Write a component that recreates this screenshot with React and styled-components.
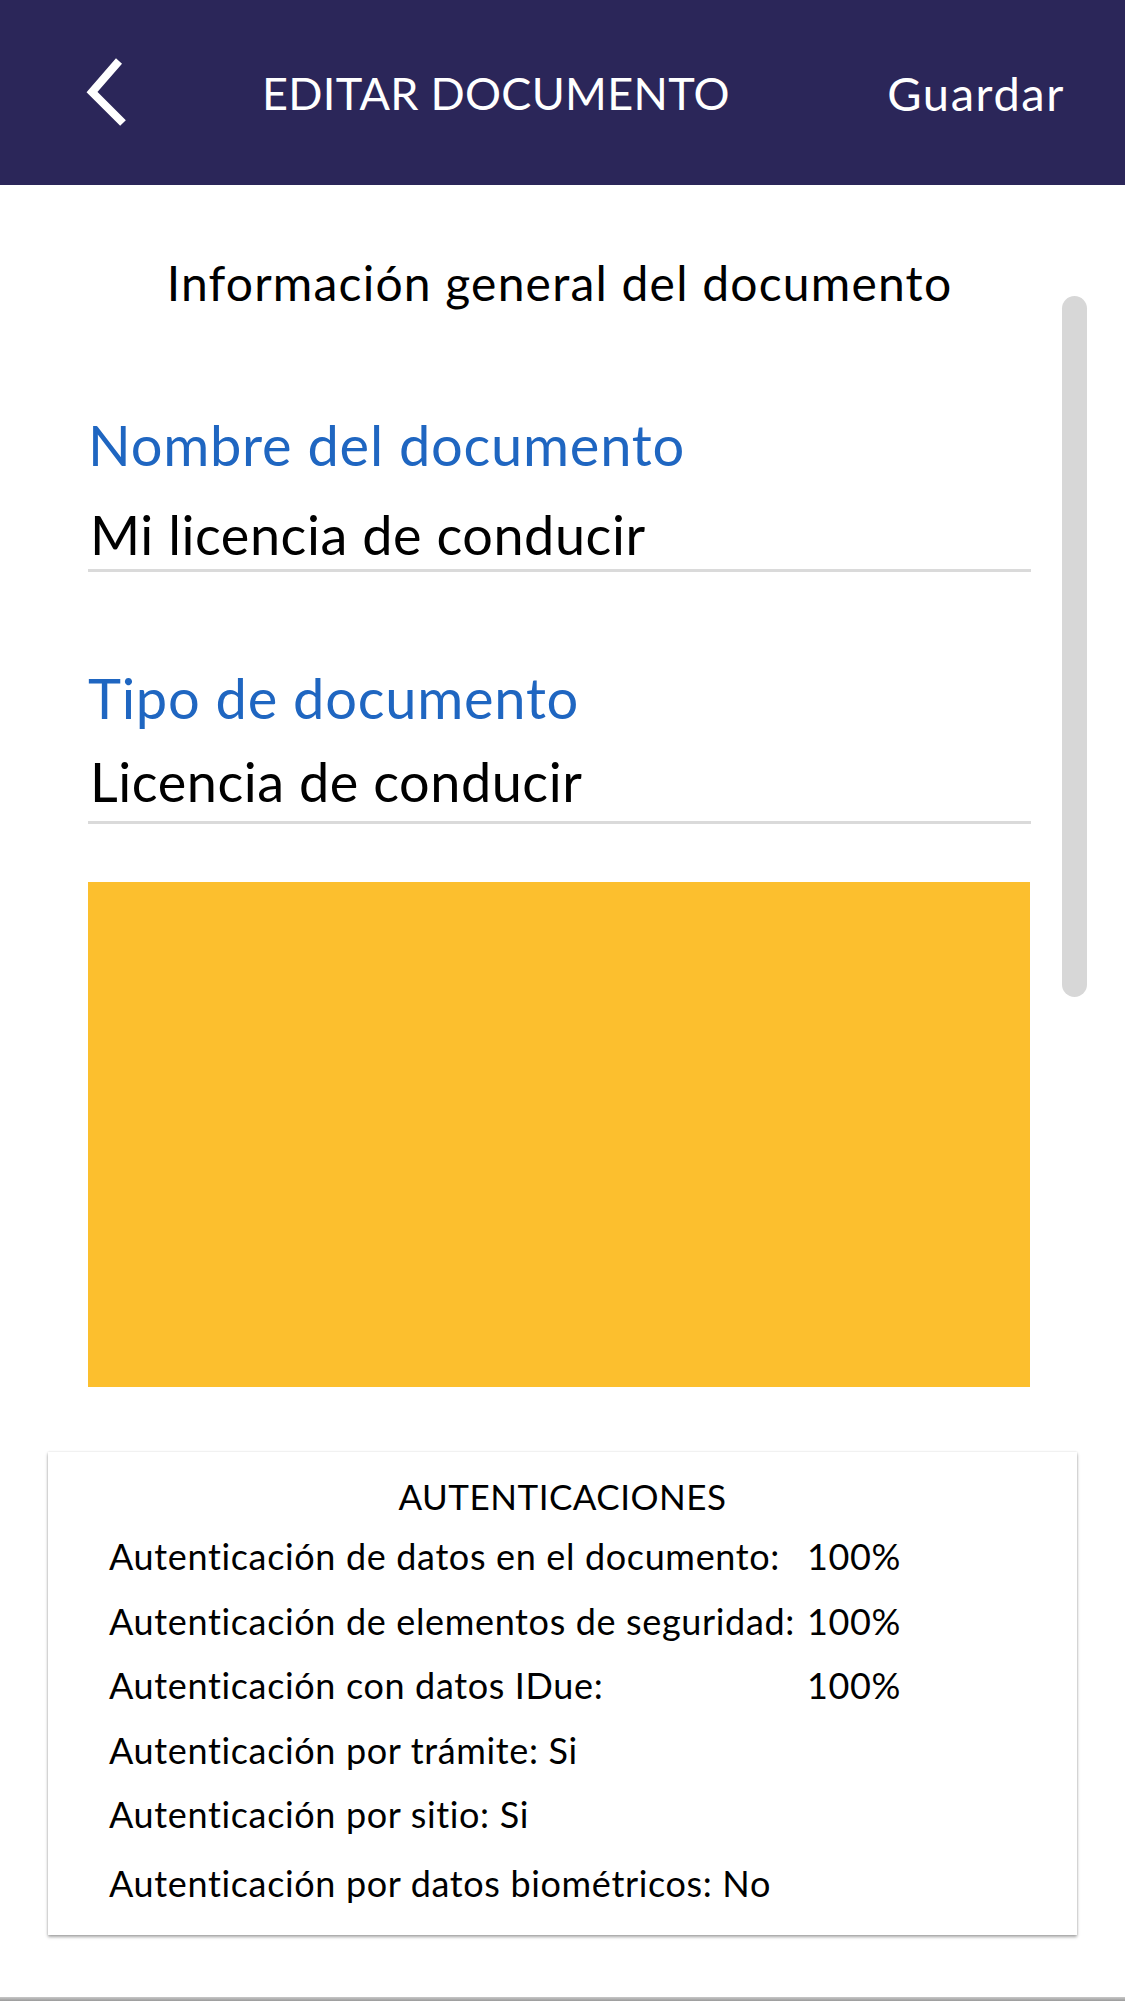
import React from 'react';
import styled, { createGlobalStyle } from 'styled-components';

const GlobalStyle = createGlobalStyle`
  html, body {
    margin: 0;
    padding: 0;
    background: #ffffff;
  }
  body {
    font-family: 'Lato', 'Noto Sans', sans-serif;
    color: #000000;
  }
  * {
    box-sizing: border-box;
  }
`;

const Page = styled.div`
  position: relative;
  display: flex;
  flex-direction: column;
  width: 1125px;
  height: 2001px;
  overflow: hidden;
  background: #ffffff;
`;

const Header = styled.header`
  display: flex;
  align-items: center;
  height: 185px;
  padding: 0 60px 0 80px;
  background-color: #2b2659;
  color: #ffffff;
`;

const BackButton = styled.button`
  display: flex;
  width: 48px;
  height: 72px;
  padding: 0;
  border: none;
  background: transparent;
  cursor: pointer;
`;

const Title = styled.h1`
  margin: 0 0 0 134px;
  font-size: 45px;
  font-weight: 400;
  line-height: 56px;
  letter-spacing: 0.3px;
`;

const SaveButton = styled.button`
  margin-left: auto;
  padding: 0;
  border: none;
  background: transparent;
  color: #ffffff;
  font-family: inherit;
  font-size: 47px;
  font-weight: 400;
  line-height: 56px;
  letter-spacing: 1.6px;
  cursor: pointer;
`;

const Body = styled.main`
  position: relative;
  padding: 68px 94px 0 88px;
`;

const SectionTitle = styled.h2`
  margin: 0;
  text-align: center;
  font-size: 48px;
  font-weight: 400;
  line-height: 60px;
  letter-spacing: 1.2px;
`;

const Field = styled.div`
  display: flex;
  flex-direction: column;
  margin-top: ${props => props.offset || 0}px;
`;

const FieldLabel = styled.label`
  font-size: 56px;
  font-weight: 400;
  line-height: 70px;
  letter-spacing: 0.75px;
  color: #1f66c1;
`;

const FieldValue = styled.div`
  margin-top: ${props => props.gap || 20}px;
  padding: 0 0 ${props => props.pad || 0}px 2px;
  font-size: 54px;
  line-height: 68px;
  letter-spacing: 0.55px;
  border-bottom: 3px solid #dadada;
`;

const Preview = styled.div`
  height: 505px;
  margin: 58px 1px 0 0;
  background-color: #fcbf2e;
`;

const ScrollThumb = styled.div`
  position: absolute;
  top: 111px;
  right: 38px;
  width: 25px;
  height: 701px;
  border-radius: 13px;
  background-color: #d7d7d7;
`;

const CardWrap = styled.div`
  padding: 65px 48px 0 48px;
`;

const Card = styled.section`
  padding: 22px 20px 20px 61px;
  background: #ffffff;
  box-shadow: 0 2px 3px rgba(0, 0, 0, 0.35), 0 0 2px rgba(0, 0, 0, 0.12);
`;

const CardTitle = styled.h3`
  margin: 0 0 6px -41px;
  text-align: center;
  font-size: 35px;
  font-weight: 400;
  line-height: 44px;
  letter-spacing: 0.5px;
`;

const AuthGrid = styled.div`
  display: grid;
  grid-template-columns: max-content auto;
  column-gap: 12px;
`;

const AuthLabel = styled.div`
  grid-column: ${props => (props.wide ? '1 / span 2' : 'auto')};
  margin-top: ${props => props.extra || 0}px;
  font-size: 36px;
  line-height: 64.5px;
  letter-spacing: 0.65px;
`;

const AuthValue = styled.div`
  font-size: 36px;
  line-height: 64.5px;
  letter-spacing: 0.65px;
`;

const BottomEdge = styled.div`
  margin-top: auto;
  height: 4px;
  background: linear-gradient(to bottom, #c8c8c8, #9a9a9a);
`;

const ChevronLeft = () => (
  <svg width="48" height="72" viewBox="0 0 48 72" fill="none">
    <polyline
      points="39,4 12,35 43,66"
      stroke="#ffffff"
      strokeWidth="8"
      strokeLinecap="butt"
      strokeLinejoin="miter"
    />
  </svg>
);

const authRows = [
  { label: 'Autenticación de datos en el documento:', value: '100%' },
  { label: 'Autenticación de elementos de seguridad:', value: '100%' },
  { label: 'Autenticación con datos IDue:', value: '100%' },
  { label: 'Autenticación por trámite: Si' },
  { label: 'Autenticación por sitio: Si' },
  { label: 'Autenticación por datos biométricos: No', extra: 4 }
];

export default function App() {
  return (
    <Page>
      <GlobalStyle />
      <Header>
        <BackButton aria-label="Volver">
          <ChevronLeft />
        </BackButton>
        <Title>EDITAR DOCUMENTO</Title>
        <SaveButton>Guardar</SaveButton>
      </Header>

      <Body>
        <ScrollThumb />
        <SectionTitle>Información general del documento</SectionTitle>

        <Field offset={97}>
          <FieldLabel>Nombre del documento</FieldLabel>
          <FieldValue gap={21} pad={0}>Mi licencia de conducir</FieldValue>
        </Field>

        <Field offset={91}>
          <FieldLabel>Tipo de documento</FieldLabel>
          <FieldValue gap={15} pad={5}>Licencia de conducir</FieldValue>
        </Field>

        <Preview />
      </Body>

      <CardWrap>
        <Card>
          <CardTitle>AUTENTICACIONES</CardTitle>
          <AuthGrid>
            {authRows.map(row =>
              row.value ? (
                <React.Fragment key={row.label}>
                  <AuthLabel>{row.label}</AuthLabel>
                  <AuthValue>{row.value}</AuthValue>
                </React.Fragment>
              ) : (
                <AuthLabel wide extra={row.extra} key={row.label}>
                  {row.label}
                </AuthLabel>
              )
            )}
          </AuthGrid>
        </Card>
      </CardWrap>

      <BottomEdge />
    </Page>
  );
}
